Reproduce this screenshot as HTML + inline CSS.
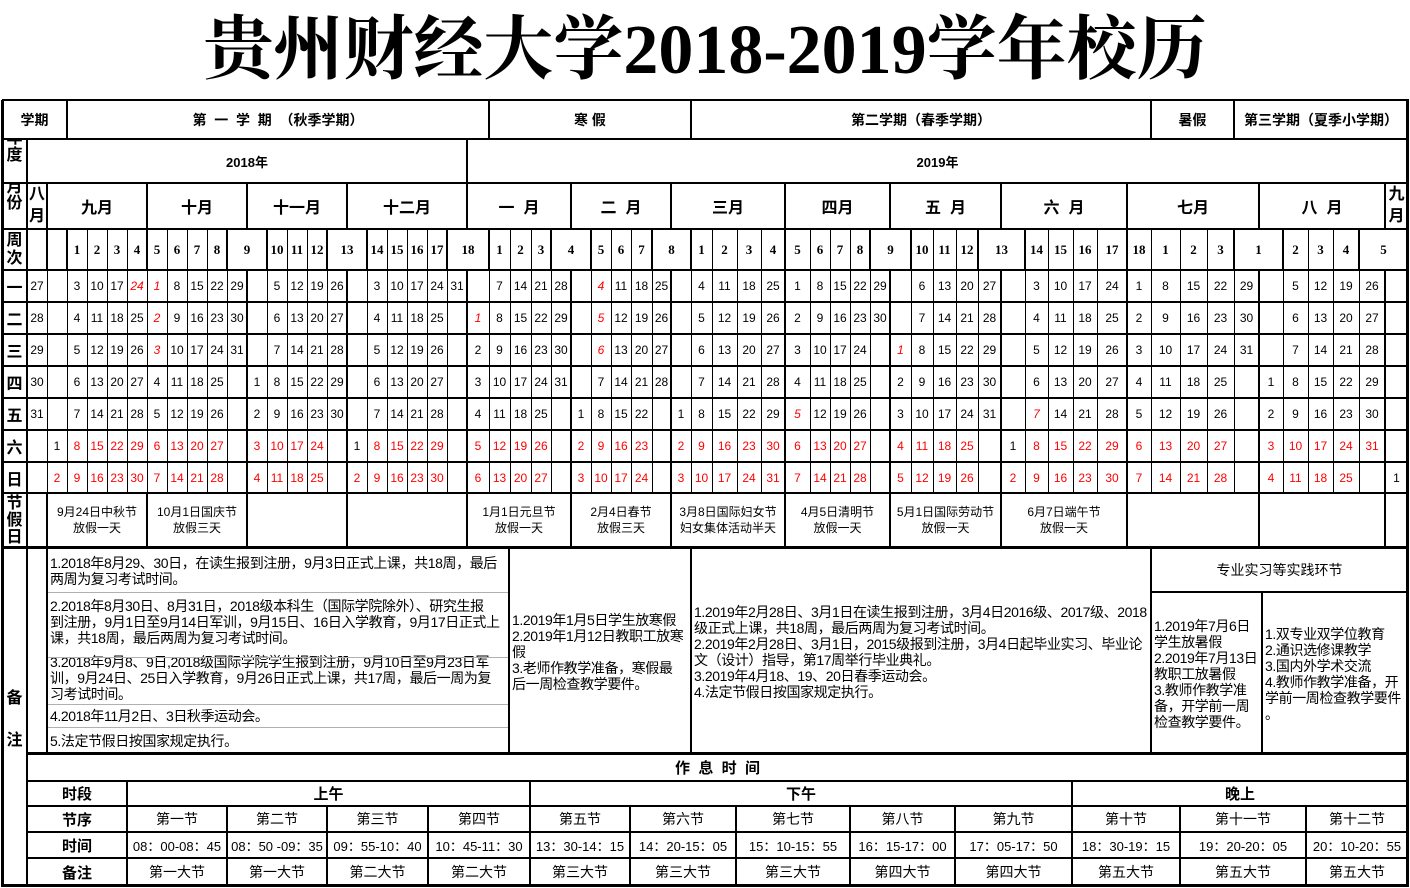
<!DOCTYPE html>
<html><head><meta charset="utf-8">
<style>
*{margin:0;padding:0;box-sizing:border-box}
html,body{width:1410px;height:888px;background:#fff;overflow:hidden}
body{position:relative;font-family:"Liberation Sans","Noto Sans CJK SC",sans-serif;color:#000}
.t{position:absolute;display:flex;align-items:center;justify-content:center;text-align:center;white-space:nowrap;overflow:hidden}
.b{font-weight:bold}
.h{font-size:14px;font-weight:bold}
.m{font-size:16px;font-weight:bold}
.hol{font-size:12px;line-height:16px}
.n{position:absolute;font-size:14px;line-height:16px;white-space:nowrap;text-align:left;letter-spacing:-0.4px}
.ln{position:absolute;background:#000}
.title{position:absolute;left:0;top:11px;width:1410px;text-align:center;font-family:"Liberation Serif","Noto Serif CJK SC",serif;font-weight:bold;font-size:70px;line-height:80px;white-space:nowrap}
.z{font-size:14px}
.zb{font-size:15px;font-weight:bold}
</style></head><body>
<div class="title">贵州财经大学2018-2019学年校历</div>

<div class="t h" style="left:2px;top:100px;width:65px;height:39px">学期</div>
<div class="t h" style="left:67px;top:100px;width:422px;height:39px">第&nbsp;&nbsp;一&nbsp;&nbsp;学&nbsp;&nbsp;期&nbsp;&nbsp;（秋季学期）</div>
<div class="t h" style="left:489px;top:100px;width:202px;height:39px">寒&nbsp;假</div>
<div class="t h" style="left:691px;top:100px;width:460px;height:39px">第二学期（春季学期）</div>
<div class="t h" style="left:1151px;top:100px;width:83px;height:39px">暑假</div>
<div class="t h" style="left:1234px;top:100px;width:174px;height:39px">第三学期（夏季小学期）</div>

<div class="t m" style="left:2px;top:139px;width:25px;height:44px;align-items:flex-start;line-height:17px;white-space:normal"><div style="margin-top:-9px">年<br>度</div></div>
<div class="t h" style="left:27px;top:139px;width:440px;height:44px;font-size:13px">2018年</div>
<div class="t h" style="left:467px;top:139px;width:941px;height:44px;font-size:13px">2019年</div>

<div class="t m" style="left:2px;top:183px;width:25px;height:46px;align-items:flex-start;line-height:16px;white-space:normal"><div style="margin-top:-3px">月<br>份</div></div>
<div class="t m" style="left:27px;top:183px;width:20px;height:46px;line-height:22px;white-space:normal"><div>八<br>月</div></div>
<div class="t m" style="left:47px;top:183px;width:100px;height:46px">九月</div>
<div class="t m" style="left:147px;top:183px;width:100px;height:46px">十月</div>
<div class="t m" style="left:247px;top:183px;width:100px;height:46px">十一月</div>
<div class="t m" style="left:347px;top:183px;width:120px;height:46px">十二月</div>
<div class="t m" style="left:467px;top:183px;width:104px;height:46px">一&nbsp;&nbsp;月</div>
<div class="t m" style="left:571px;top:183px;width:100px;height:46px">二&nbsp;&nbsp;月</div>
<div class="t m" style="left:671px;top:183px;width:114px;height:46px">三月</div>
<div class="t m" style="left:785px;top:183px;width:105px;height:46px">四月</div>
<div class="t m" style="left:890px;top:183px;width:111px;height:46px">五&nbsp;&nbsp;月</div>
<div class="t m" style="left:1001px;top:183px;width:126px;height:46px">六&nbsp;&nbsp;月</div>
<div class="t m" style="left:1127px;top:183px;width:132px;height:46px">七月</div>
<div class="t m" style="left:1259px;top:183px;width:126px;height:46px">八&nbsp;&nbsp;月</div>
<div class="t m" style="left:1385px;top:183px;width:23px;height:46px;line-height:22px;white-space:normal"><div>九<br>月</div></div>

<div class="t m" style="left:2px;top:229px;width:25px;height:41px;line-height:18px;white-space:normal"><div>周<br>次</div></div>
<div class="t m" style="left:2px;top:270px;width:25px;height:32px">一</div>
<div class="t m" style="left:2px;top:302px;width:25px;height:32px">二</div>
<div class="t m" style="left:2px;top:334px;width:25px;height:32px">三</div>
<div class="t m" style="left:2px;top:366px;width:25px;height:32px">四</div>
<div class="t m" style="left:2px;top:398px;width:25px;height:32px">五</div>
<div class="t m" style="left:2px;top:430px;width:25px;height:32px">六</div>
<div class="t m" style="left:2px;top:462px;width:25px;height:31px">日</div>

<div class="t m" style="left:2px;top:493px;width:25px;height:54px;line-height:17px;white-space:normal"><div>节<br>假<br>日</div></div>
<div class="t hol" style="left:47px;top:493px;width:100px;height:54px"><div>9月24日中秋节<br>放假一天</div></div>
<div class="t hol" style="left:147px;top:493px;width:100px;height:54px"><div>10月1日国庆节<br>放假三天</div></div>
<div class="t hol" style="left:467px;top:493px;width:104px;height:54px"><div>1月1日元旦节<br>放假一天</div></div>
<div class="t hol" style="left:571px;top:493px;width:100px;height:54px"><div>2月4日春节<br>放假三天</div></div>
<div class="t hol" style="left:671px;top:493px;width:114px;height:54px"><div>3月8日国际妇女节<br>妇女集体活动半天</div></div>
<div class="t hol" style="left:785px;top:493px;width:105px;height:54px"><div>4月5日清明节<br>放假一天</div></div>
<div class="t hol" style="left:890px;top:493px;width:111px;height:54px"><div>5月1日国际劳动节<br>放假一天</div></div>
<div class="t hol" style="left:1001px;top:493px;width:126px;height:54px"><div>6月7日端午节<br>放假一天</div></div>

<div class="t m" style="left:2px;top:685px;width:25px;height:22px">备</div>
<div class="t m" style="left:2px;top:727px;width:25px;height:22px">注</div>
<div class="n" style="left:50px;top:555px">1.2018年8月29、30日，在读生报到注册，9月3日正式上课，共18周，最后<br>两周为复习考试时间。</div>
<div class="n" style="left:50px;top:598px">2.2018年8月30日、8月31日，2018级本科生（国际学院除外）、研究生报<br>到注册，9月1日至9月14日军训，9月15日、16日入学教育，9月17日正式上<br>课，共18周，最后两周为复习考试时间。</div>
<div class="n" style="left:50px;top:654px">3.2018年9月8、9日,2018级国际学院学生报到注册，9月10日至9月23日军<br>训，9月24日、25日入学教育，9月26日正式上课，共17周，最后一周为复<br>习考试时间。</div>
<div class="n" style="left:50px;top:708px">4.2018年11月2日、3日秋季运动会。</div>
<div class="n" style="left:50px;top:733px">5.法定节假日按国家规定执行。</div>
<div class="n" style="left:512px;top:612px">1.2019年1月5日学生放寒假<br>2.2019年1月12日教职工放寒<br>假<br>3.老师作教学准备，寒假最<br>后一周检查教学要件。</div>
<div class="n" style="left:694px;top:604px">1.2019年2月28日、3月1日在读生报到注册，3月4日2016级、2017级、2018<br>级正式上课，共18周，最后两周为复习考试时间。<br>2.2019年2月28日、3月1日，2015级报到注册，3月4日起毕业实习、毕业论<br>文（设计）指导，第17周举行毕业典礼。<br>3.2019年4月18、19、20日春季运动会。<br>4.法定节假日按国家规定执行。</div>
<div class="t z" style="left:1151px;top:547px;width:257px;height:45px">专业实习等实践环节</div>
<div class="n" style="left:1154px;top:618px">1.2019年7月6日<br>学生放暑假<br>2.2019年7月13日<br>教职工放暑假<br>3.教师作教学准<br>备，开学前一周<br>检查教学要件。</div>
<div class="n" style="left:1265px;top:626px">1.双专业双学位教育<br>2.通识选修课教学<br>3.国内外学术交流<br>4.教师作教学准备，开<br>学前一周检查教学要件<br>。</div>

<div class="t zb" style="left:27px;top:753px;width:1381px;height:28px">作&nbsp;&nbsp;息&nbsp;&nbsp;时&nbsp;&nbsp;间</div>
<div class="t zb" style="left:27px;top:781px;width:100px;height:25px">时段</div>
<div class="t zb" style="left:127px;top:781px;width:403px;height:25px">上午</div>
<div class="t zb" style="left:530px;top:781px;width:542px;height:25px">下午</div>
<div class="t zb" style="left:1072px;top:781px;width:336px;height:25px">晚上</div>
<div class="t zb" style="left:27px;top:806px;width:100px;height:26px">节序</div>
<div class="t zb" style="left:27px;top:832px;width:100px;height:26px">时间</div>
<div class="t zb" style="left:27px;top:858px;width:100px;height:28px">备注</div>
<div id="grid"></div>

<script>
var g=document.getElementById('grid');
function L(x,y,w,h,c){var d=document.createElement('div');d.className='ln';d.style.cssText='left:'+x+'px;top:'+y+'px;width:'+w+'px;height:'+h+'px'+(c?';background:'+c:'');g.appendChild(d);}
function H(x1,x2,y,t,c){L(x1,y-Math.floor(t/2),x2-x1+1,t,c);}
function V(x,y1,y2,t){L(x-Math.floor(t/2),y1,t,y2-y1+1);}
function T(x1,x2,y1,y2,txt,st){var d=document.createElement('div');d.className='t';d.style.cssText='left:'+x1+'px;top:'+y1+'px;width:'+(x2-x1)+'px;height:'+(y2-y1)+'px;'+(st||'');d.textContent=txt;g.appendChild(d);}
var X=[27,47,67,87,107,127,147,167,187,207,227,247,267,287,307,327,347,367,387,407,427,447,467,489,510,531,551,571,591,611,631,652,671,691,712,737,761,785,810,830,850,870,890,911,933,956,978,1001,1025,1048,1073,1097,1127,1151,1180,1207,1234,1259,1283,1308,1333,1359,1385,1408];
var R=[
"27 . 3 10 17 i24 i1 8 15 22 29 . 5 12 19 26 . 3 10 17 24 31 . 7 14 21 28 . i4 11 18 25 . 4 11 18 25 1 8 15 22 29 . 6 13 20 27 . 3 10 17 24 1 8 15 22 29 . 5 12 19 26 .",
"28 . 4 11 18 25 i2 9 16 23 30 . 6 13 20 27 . 4 11 18 25 . i1 8 15 22 29 . i5 12 19 26 . 5 12 19 26 2 9 16 23 30 . 7 14 21 28 . 4 11 18 25 2 9 16 23 30 . 6 13 20 27 .",
"29 . 5 12 19 26 i3 10 17 24 31 . 7 14 21 28 . 5 12 19 26 . 2 9 16 23 30 . i6 13 20 27 . 6 13 20 27 3 10 17 24 . i1 8 15 22 29 . 5 12 19 26 3 10 17 24 31 . 7 14 21 28 .",
"30 . 6 13 20 27 4 11 18 25 . 1 8 15 22 29 . 6 13 20 27 . 3 10 17 24 31 . 7 14 21 28 . 7 14 21 28 4 11 18 25 . 2 9 16 23 30 . 6 13 20 27 4 11 18 25 . 1 8 15 22 29 .",
"31 . 7 14 21 28 5 12 19 26 . 2 9 16 23 30 . 7 14 21 28 . 4 11 18 25 . 1 8 15 22 . 1 8 15 22 29 i5 12 19 26 . 3 10 17 24 31 . i7 14 21 28 5 12 19 26 . 2 9 16 23 30 .",
". 1 r8 r15 r22 r29 r6 r13 r20 r27 . r3 r10 r17 r24 . 1 r8 r15 r22 r29 . r5 r12 r19 r26 . r2 r9 r16 r23 . r2 r9 r16 r23 r30 r6 r13 r20 r27 . r4 r11 r18 r25 . 1 r8 r15 r22 r29 r6 r13 r20 r27 . r3 r10 r17 r24 r31 .",
". r2 r9 r16 r23 r30 r7 r14 r21 r28 . r4 r11 r18 r25 . r2 r9 r16 r23 r30 . r6 r13 r20 r27 . r3 r10 r17 r24 . r3 r10 r17 r24 r31 r7 r14 r21 r28 . r5 r12 r19 r26 . r2 r9 r16 r23 r30 r7 r14 r21 r28 . r4 r11 r18 r25 . 1"
];
var RY=[270,302,334,366,398,430,462,493];
for(var r=0;r<7;r++){var a=R[r].split(' ');for(var c=0;c<63&&c<a.length;c++){var v=a[c];if(v=='.')continue;var st='font-size:12px;';if(v[0]=='r'){st+='color:#f00;';v=v.slice(1);}else if(v[0]=='i'){st+='color:#f00;font-style:italic;';v=v.slice(1);}T(X[c],X[c+1],RY[r],RY[r+1],v,st);}}
var W=[[67,87,'1'],[87,107,'2'],[107,127,'3'],[127,147,'4'],[147,167,'5'],[167,187,'6'],[187,207,'7'],[207,227,'8'],[227,267,'9'],[267,287,'10'],[287,307,'11'],[307,327,'12'],[327,367,'13'],[367,387,'14'],[387,407,'15'],[407,427,'16'],[427,447,'17'],[447,489,'18'],[489,510,'1'],[510,531,'2'],[531,551,'3'],[551,591,'4'],[591,611,'5'],[611,631,'6'],[631,652,'7'],[652,691,'8'],[691,712,'1'],[712,737,'2'],[737,761,'3'],[761,785,'4'],[785,810,'5'],[810,830,'6'],[830,850,'7'],[850,870,'8'],[870,911,'9'],[911,933,'10'],[933,956,'11'],[956,978,'12'],[978,1025,'13'],[1025,1048,'14'],[1048,1073,'15'],[1073,1097,'16'],[1097,1127,'17'],[1127,1151,'18'],[1151,1180,'1'],[1180,1207,'2'],[1207,1234,'3'],[1234,1283,'1'],[1283,1308,'2'],[1308,1333,'3'],[1333,1359,'4'],[1359,1408,'5']];
var wb=[27,47,67];
for(var i=0;i<W.length;i++){T(W[i][0],W[i][1],229,270,W[i][2],'font-size:13px;font-weight:bold;font-family:"Liberation Serif",serif');wb.push(W[i][0]);}
var thickW=[27,47,67,147,227,267,327,367,447,489,551,591,652,691,785,870,911,978,1025,1127,1234,1283,1359];
wb.forEach(function(x){V(x,229,270,thickW.indexOf(x)>=0?2:1);});
var thickD=[27,247,347,467,571,671,785,890,1001,1127,1259,1385];
X.slice(0,63).forEach(function(x){V(x,270,493,thickD.indexOf(x)>=0?2:1);});
var S=[[127,227,'第一节','08：00-08：45','第一大节'],[227,327,'第二节','08：50 -09：35','第一大节'],[327,428,'第三节','09：55-10：40','第二大节'],[428,530,'第四节','10：45-11：30','第二大节'],[530,630,'第五节','13：30-14：15','第三大节'],[630,736,'第六节','14：20-15：05','第三大节'],[736,850,'第七节','15：10-15：55','第三大节'],[850,955,'第八节','16：15-17：00','第四大节'],[955,1072,'第九节','17：05-17：50','第四大节'],[1072,1180,'第十节','18：30-19：15','第五大节'],[1180,1306,'第十一节','19：20-20：05','第五大节'],[1306,1408,'第十二节','20：10-20：55','第五大节']];
S.forEach(function(s){T(s[0],s[1],806,832,s[2],'font-size:14px');T(s[0],s[1],832,858,s[3],'font-size:13px');T(s[0],s[1],858,886,s[4],'font-size:14px');});
[100,139,183,229,270].forEach(function(y){H(2,1408,y,2);});
[302,334,366,398,430,462].forEach(function(y){H(27,1408,y,2);H(2,27,y,2);});
H(2,1408,493,2);H(2,1408,547,3);
H(1151,1408,592,2);
[592,657,704,727].forEach(function(y){H(48,508,y,1,'#b0b0b0');});
H(27,1408,753,3);H(27,1408,781,2);[806,832,858].forEach(function(y){H(27,1408,y,2);});
H(2,1408,885,3);
V(2,100,886,3);V(1407,100,886,3);
[67,489,691,1151,1234].forEach(function(x){V(x,100,139,2);});
[27,467].forEach(function(x){V(x,139,183,2);});
var MB=[27,47,147,247,347,467,571,671,785,890,1001,1127,1259,1385];
MB.forEach(function(x){V(x,183,229,2);V(x,493,547,2);});
[27,47,509,691,1151].forEach(function(x){V(x,547,753,2);});
V(1262,592,753,2);
V(27,753,886,2);
[127,530,1072].forEach(function(x){V(x,781,886,2);});
[227,327,428,630,736,850,955,1180,1306].forEach(function(x){V(x,806,886,2);});
</script>
</body></html>
